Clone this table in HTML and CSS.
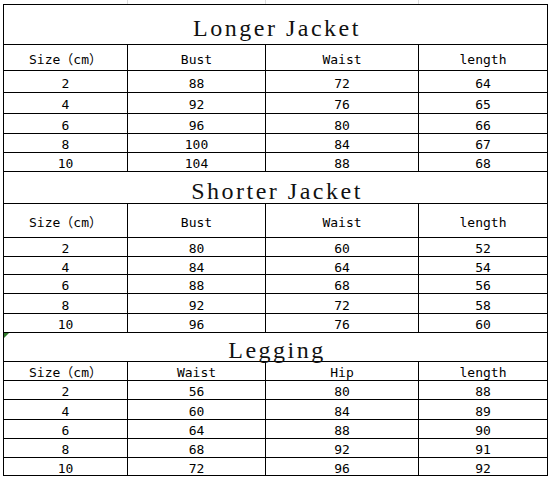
FILE: index.html
```html
<!DOCTYPE html>
<html>
<head>
<meta charset="utf-8">
<link rel="stylesheet" href="styles.css">
</head>
<body>
<div class="gridlines">
  <div class="gl"></div><div class="gl"></div><div class="gl"></div>
</div>
<div class="sheet">
  <div class="cell title">Longer Jacket</div>
  <div class="cell">Size（cm）</div><div class="cell">Bust</div><div class="cell">Waist</div><div class="cell">length</div>
  <div class="cell">2</div><div class="cell">88</div><div class="cell">72</div><div class="cell">64</div>
  <div class="cell">4</div><div class="cell">92</div><div class="cell">76</div><div class="cell">65</div>
  <div class="cell">6</div><div class="cell">96</div><div class="cell">80</div><div class="cell">66</div>
  <div class="cell">8</div><div class="cell">100</div><div class="cell">84</div><div class="cell">67</div>
  <div class="cell">10</div><div class="cell">104</div><div class="cell">88</div><div class="cell">68</div>

  <div class="cell title">Shorter Jacket</div>
  <div class="cell">Size（cm）</div><div class="cell">Bust</div><div class="cell">Waist</div><div class="cell">length</div>
  <div class="cell">2</div><div class="cell">80</div><div class="cell">60</div><div class="cell">52</div>
  <div class="cell">4</div><div class="cell">84</div><div class="cell">64</div><div class="cell">54</div>
  <div class="cell">6</div><div class="cell">88</div><div class="cell">68</div><div class="cell">56</div>
  <div class="cell">8</div><div class="cell">92</div><div class="cell">72</div><div class="cell">58</div>
  <div class="cell">10</div><div class="cell">96</div><div class="cell">76</div><div class="cell">60</div>

  <div class="cell title flagged">Legging<span class="flag"></span></div>
  <div class="cell">Size（cm）</div><div class="cell">Waist</div><div class="cell">Hip</div><div class="cell">length</div>
  <div class="cell">2</div><div class="cell">56</div><div class="cell">80</div><div class="cell">88</div>
  <div class="cell">4</div><div class="cell">60</div><div class="cell">84</div><div class="cell">89</div>
  <div class="cell">6</div><div class="cell">64</div><div class="cell">88</div><div class="cell">90</div>
  <div class="cell">8</div><div class="cell">68</div><div class="cell">92</div><div class="cell">91</div>
  <div class="cell">10</div><div class="cell">72</div><div class="cell">96</div><div class="cell">92</div>
</div>
</body>
</html>
```

FILE: styles.css
```css
html, body {
  margin: 0;
  padding: 0;
  background: #fff;
}

.gridlines {
  display: flex;
  height: 4px;
  padding-left: 3px;
}
.gl {
  border-right: 1px solid #dcdcdc;
}
.gl:nth-child(1) { width: 124px; }
.gl:nth-child(2) { width: 137px; }
.gl:nth-child(3) { width: 152px; }

.sheet {
  display: grid;
  width: 543px;
  margin-left: 3px;
  padding: 1px;
  gap: 1px;
  background: #000;
  grid-template-columns: 123px 137px 152px 128px;
  grid-template-rows:
    39px 25px 21px 20px 19px 18px 18px
    31px 33px 18px 17px 18px 19px 18px
    28px 18px 18px 19px 18px 18px 17px;
  font-family: "DejaVu Sans Mono", "Noto Sans CJK SC", monospace;
  font-size: 13px;
  color: #000;
}

.cell {
  background: #fff;
  display: flex;
  align-items: center;
  justify-content: center;
  padding-top: 3px;
  line-height: 13px;
  box-sizing: border-box;
  white-space: nowrap;
}

.title {
  grid-column: 1 / -1;
  font-family: "Liberation Serif", serif;
  font-size: 24px;
  letter-spacing: 2.5px;
  line-height: 26px;
  padding-top: 6px;
  padding-left: 3px;
  color: #111;
}

.flagged {
  position: relative;
}
.flag {
  position: absolute;
  left: 0;
  top: 0;
  width: 0;
  height: 0;
  border-top: 5px solid #2f7a2a;
  border-right: 5px solid transparent;
}
```
